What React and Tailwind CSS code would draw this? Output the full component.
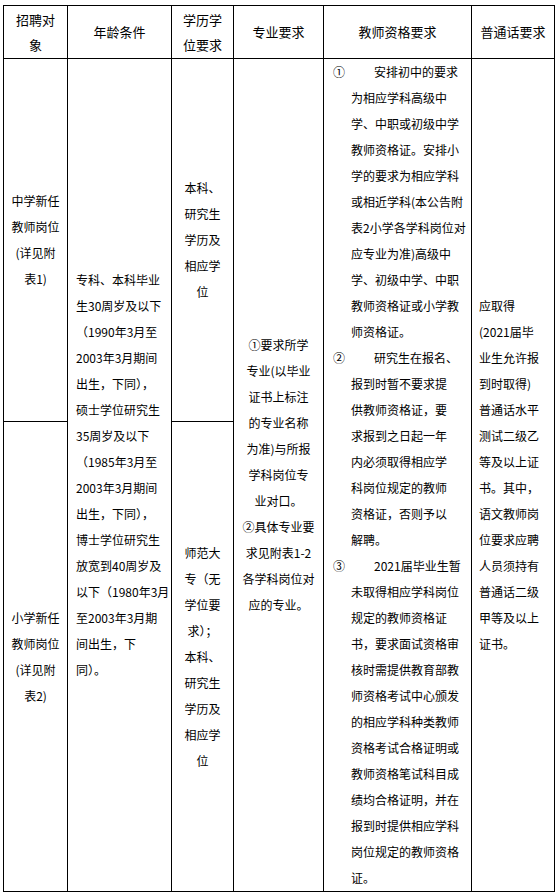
import React from 'react';

const ageLines = [
    "专科、本科毕业",
    "生30周岁及以下",
    "（1990年3月至",
    "2003年3月期间",
    "出生，下同），",
    "硕士学位研究生",
    "35周岁及以下",
    "（1985年3月至",
    "2003年3月期间",
    "出生，下同），",
    "博士学位研究生",
    "放宽到40周岁及",
    "以下（1980年3月",
    "至2003年3月期",
    "间出生，下",
    "同）。",
];

const majorLines = [
    "①要求所学",
    "专业(以毕业",
    "证书上标注",
    "的专业名称",
    "为准)与所报",
    "学科岗位专",
    "业对口。",
    "②具体专业要",
    "求见附表1-2",
    "各学科岗位对",
    "应的专业。",
];

// 教师资格要求：每条第一行带序号，其余为续行
const certItems = [
    {
        no: "①",
        first: "安排初中的要求",
        rest: [
            "为相应学科高级中",
            "学、中职或初级中学",
            "教师资格证。安排小",
            "学的要求为相应学科",
            "或相近学科(本公告附",
            "表2小学各学科岗位对",
            "应专业为准)高级中",
            "学、初级中学、中职",
            "教师资格证或小学教",
            "师资格证。",
        ],
    },
    {
        no: "②",
        first: "研究生在报名、",
        rest: [
            "报到时暂不要求提",
            "供教师资格证，要",
            "求报到之日起一年",
            "内必须取得相应学",
            "科岗位规定的教师",
            "资格证，否则予以",
            "解聘。",
        ],
    },
    {
        no: "③",
        first: "2021届毕业生暂",
        rest: [
            "未取得相应学科岗位",
            "规定的教师资格证",
            "书，要求面试资格审",
            "核时需提供教育部教",
            "师资格考试中心颁发",
            "的相应学科种类教师",
            "资格考试合格证明或",
            "教师资格笔试科目成",
            "绩均合格证明，并在",
            "报到时提供相应学科",
            "岗位规定的教师资格",
            "证。",
        ],
    },
];

const mandarinLines = [
    "应取得",
    "(2021届毕",
    "业生允许报",
    "到时取得)",
    "普通话水平",
    "测试二级乙",
    "等及以上证",
    "书。其中，",
    "语文教师岗",
    "位要求应聘",
    "人员须持有",
    "普通话二级",
    "甲等及以上",
    "证书。",
];

function Lines({ lines, className = "" }) {
    return (
        <div className={className}>
            {lines.map((line, i) => (
                <div key={i} className="leading-[26px] whitespace-nowrap">{line}</div>
            ))}
        </div>
    );
}

const cell = "border border-black p-0 align-middle";

export default function App() {
    return (
        <div
            className="w-[558px] h-[896px] bg-white text-black text-[12px] pt-[5px] pl-[3px]"
            style={{ fontFamily: "'Noto Sans CJK SC', 'Noto Sans', sans-serif" }}
        >
            <table className="table-fixed border-collapse w-[551px]">
                <colgroup>
                    <col className="w-[64px]" />
                    <col className="w-[104px]" />
                    <col className="w-[62px]" />
                    <col className="w-[90px]" />
                    <col className="w-[148px]" />
                    <col className="w-[83px]" />
                </colgroup>
                <thead>
                    <tr className="h-[53px] text-[13px] text-center">
                        <th className={cell + " font-normal"}>
                            <Lines lines={["招聘对", "象"]} className="[&>div]:leading-[25px]" />
                        </th>
                        <th className={cell + " font-normal"}>年龄条件</th>
                        <th className={cell + " font-normal"}>
                            <Lines lines={["学历学", "位要求"]} className="[&>div]:leading-[25px]" />
                        </th>
                        <th className={cell + " font-normal"}>专业要求</th>
                        <th className={cell + " font-normal"}>教师资格要求</th>
                        <th className={cell + " font-normal"}>普通话要求</th>
                    </tr>
                </thead>
                <tbody>
                    <tr className="h-[363px]">
                        <td className={cell + " text-center"}>
                            <Lines lines={["中学新任", "教师岗位", "(详见附", "表1)"]} />
                        </td>
                        <td className={cell + " pl-[8px]"} rowSpan={2}>
                            <Lines lines={ageLines} />
                        </td>
                        <td className={cell + " text-center"}>
                            <Lines lines={["本科、", "研究生", "学历及", "相应学", "位"]} />
                        </td>
                        <td className={cell + " text-center"} rowSpan={2}>
                            <Lines lines={majorLines} />
                        </td>
                        <td className={cell + " pl-[27px]"} rowSpan={2}>
                            {certItems.map((item) => (
                                <div key={item.no}>
                                    <div className="flex -ml-[18px] leading-[26px] whitespace-nowrap">
                                        <span className="w-[41px]">{item.no}</span>
                                        <span>{item.first}</span>
                                    </div>
                                    <Lines lines={item.rest} />
                                </div>
                            ))}
                        </td>
                        <td className={cell + " pl-[7px]"} rowSpan={2}>
                            <Lines lines={mandarinLines} />
                        </td>
                    </tr>
                    <tr className="h-[470px]">
                        <td className={cell + " text-center"}>
                            <Lines lines={["小学新任", "教师岗位", "(详见附", "表2)"]} />
                        </td>
                        <td className={cell + " text-center"}>
                            <Lines lines={["师范大", "专（无", "学位要", "求）；", "本科、", "研究生", "学历及", "相应学", "位"]} />
                        </td>
                    </tr>
                </tbody>
            </table>
        </div>
    );
}
